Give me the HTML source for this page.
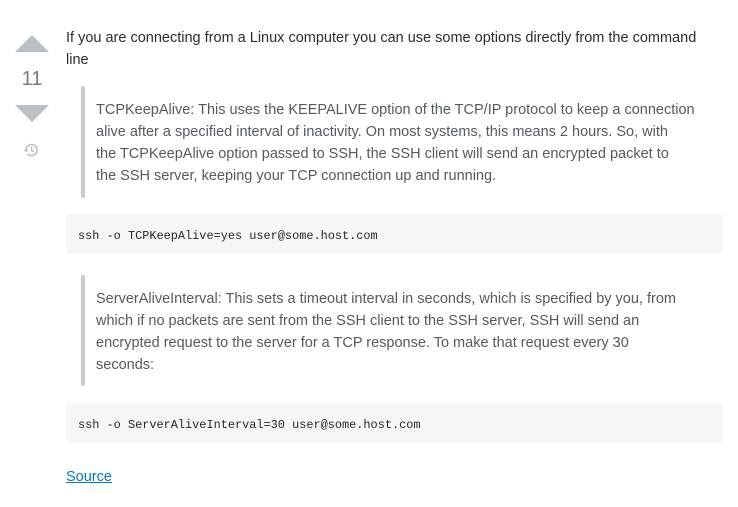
<!DOCTYPE html>
<html><head><style>
body{margin:0;background:#fff;width:738px;height:507px;overflow:hidden;font-family:"Liberation Sans",sans-serif;color:#242729;position:relative}
.p{position:absolute;left:66px;font-size:14.5px;line-height:22px;margin:0;white-space:nowrap}
.bq{position:absolute;left:81px;width:4px;background:#c8ccd0;border-radius:2px}
.bt{position:absolute;left:96px;font-size:14.5px;line-height:22px;color:#535a60;margin:0;white-space:nowrap}
.code{position:absolute;left:66px;width:657px;height:40px;background:#f6f6f6;border-radius:4px;font-family:"Liberation Mono",monospace;font-size:11.9px;line-height:44px;color:#242729;box-sizing:border-box;padding-left:12px}
</style></head><body>
<svg style="position:absolute;left:15px;top:35px" width="34" height="17"><polygon points="0,17 17,0 34,17" fill="#bbc0c4"/></svg>
<div style="position:absolute;left:0;width:64px;top:68px;text-align:center;font-size:20px;color:#737a80">11</div>
<svg style="position:absolute;left:15px;top:105px" width="34" height="17"><polygon points="0,0 34,0 17,17" fill="#bbc0c4"/></svg>
<svg style="position:absolute;left:22px;top:141px" width="18" height="18" viewBox="0 0 18 18"><path d="M4 9a5.5 5.5 0 1 1 1.6 3.9" fill="none" stroke="#bbc0c4" stroke-width="1.6"/><path d="M1.5 8.5h5L4 11.5z" fill="#bbc0c4"/><path d="M9.5 5.5v4l2.5 1.5" fill="none" stroke="#bbc0c4" stroke-width="1.5"/></svg>
<p class="p" style="top:27px;color:#2a2d30">If you are connecting from a Linux computer you can use some options directly from the command<br>line</p>
<div class="bq" style="top:86px;height:112px"></div>
<p class="bt" style="top:99px">TCPKeepAlive: This uses the KEEPALIVE option of the TCP/IP protocol to keep a connection<br>alive after a specified interval of inactivity. On most systems, this means 2 hours. So, with<br>the TCPKeepAlive option passed to SSH, the SSH client will send an encrypted packet to<br>the SSH server, keeping your TCP connection up and running.</p>
<div class="code" style="top:214px">ssh -o TCPKeepAlive=yes user@some.host.com</div>
<div class="bq" style="top:275px;height:111px"></div>
<p class="bt" style="top:288px">ServerAliveInterval: This sets a timeout interval in seconds, which is specified by you, from<br>which if no packets are sent from the SSH client to the SSH server, SSH will send an<br>encrypted request to the server for a TCP response. To make that request every 30<br>seconds:</p>
<div class="code" style="top:403px">ssh -o ServerAliveInterval=30 user@some.host.com</div>
<p class="p" style="top:466px;color:#0077cc;text-decoration:underline">Source</p>
</body></html>
